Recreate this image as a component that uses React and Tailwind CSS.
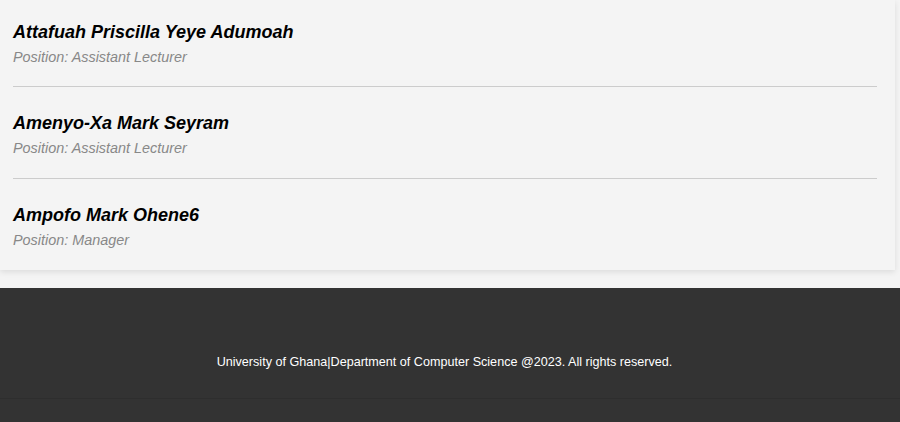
import React from 'react';

const staff = [
  { name: 'Attafuah Priscilla Yeye Adumoah', position: 'Assistant Lecturer' },
  { name: 'Amenyo-Xa Mark Seyram', position: 'Assistant Lecturer' },
  { name: 'Ampofo Mark Ohene6', position: 'Manager' },
];

export default function App() {
  return (
    <div className="min-h-screen bg-[#f4f4f4] font-['Liberation_Sans',Arial,sans-serif]">
      {/* Staff list card */}
      <div className="w-[895px] bg-[#f4f4f4] pl-[13px] pr-[18px] shadow-[0_2px_6px_rgba(0,0,0,0.1)]">
        {staff.map((person, index) => (
          <div
            key={person.name}
            className={`${index === 0 ? 'pt-[21px] pb-[20px]' : 'pt-[25px] pb-[21px]'} ${
              index < staff.length - 1 ? 'border-b border-[#cccccc]' : ''
            }`}
          >
            <div className="text-[18px] leading-[22px] font-bold italic text-black">
              {person.name}
            </div>
            <div className="mt-[5px] text-[14.4px] leading-[18px] italic text-[#888888]">
              Position: {person.position}
            </div>
          </div>
        ))}
      </div>

      {/* Footer */}
      <footer className="mt-[18px] bg-[#333333]">
        <div className="h-[110px] flex flex-col justify-end pb-[28px] pr-[11px] text-center text-[12.6px] leading-[16px] text-white">
          University of Ghana|Department of Computer Science @2023. All rights reserved.
        </div>
        <div className="h-[40px] border-t border-[#2e2e2e]"></div>
      </footer>
    </div>
  );
}
